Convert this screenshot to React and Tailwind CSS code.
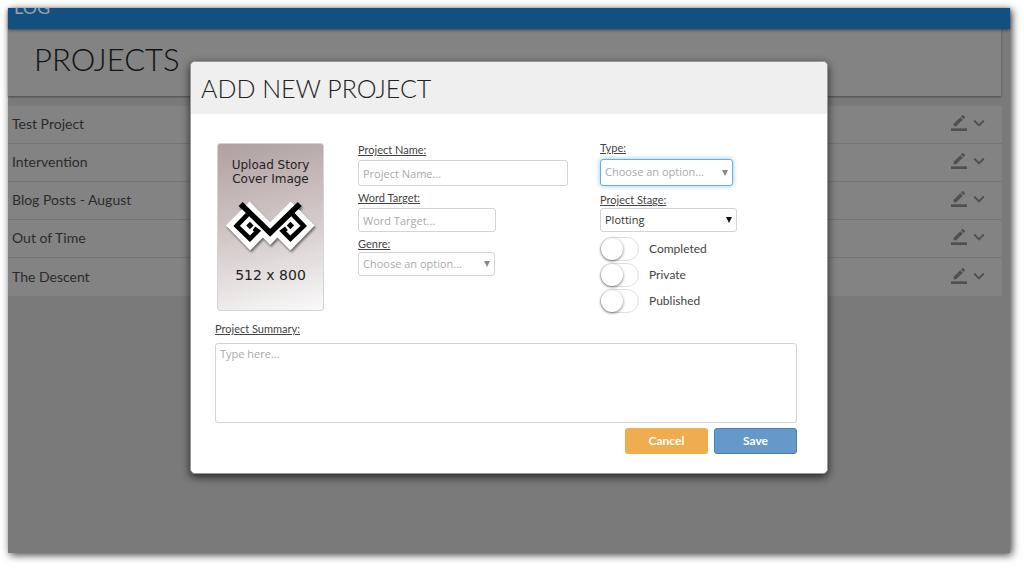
import { useState } from "react";
import { MdExpandMore } from "react-icons/md";

const projects = [
  "Test Project",
  "Intervention",
  "Blog Posts - August",
  "Out of Time",
  "The Descent",
];

const fieldClass =
  "block rounded-[3px] border border-[#d4d4d4] bg-white px-1 font-['Open_Sans',sans-serif] text-[11px] placeholder:text-[#aaa] outline-none";

function EditIcon() {
  return (
    <svg viewBox="0 0 24 24" className="size-4" fill="currentColor">
      <path d="M17.75 7 14 3.25l-10 10V17h3.75l10-10zm2.96-2.96a1 1 0 0 0 0-1.41L18.37.29a1 1 0 0 0-1.41 0L15 2.25 18.75 6l1.96-1.96z" />
      <path d="M0 20h24v4H0z" />
    </svg>
  );
}

function Logo() {
  return (
    <svg viewBox="70 205 280 170" className="h-[57px] w-[93px] drop-shadow-[1px_2px_1px_rgba(0,0,0,0.5)]">
      <path
        fill="#fff"
        d="M147 215 209 277 271 215 343 287 270 362 231 323 209 346 187 323 149 362 76 287Z"
      />
      <g fill="none" stroke="#000">
        <path strokeWidth="17" d="M120 222 209 309 298 222" />
        <path strokeWidth="14" d="M142 253 108 288 148 327 171 304 160 296" />
        <path strokeWidth="14" d="M276 253 310 288 270 327 247 304 258 296" />
      </g>
      <path d="M148 276 159 287 148 298 137 287Z" />
      <path d="M270 276 281 287 270 298 259 287Z" />
    </svg>
  );
}

function Label({ htmlFor, children }) {
  return (
    <label htmlFor={htmlFor} className="block text-[11px] leading-4 text-[#444] underline">
      {children}
    </label>
  );
}

function Select({ id, className, value, onChange, options, arrowClass }) {
  return (
    <div className="relative w-fit">
      <select
        id={id}
        value={value}
        onChange={onChange}
        className={`${fieldClass} appearance-none pr-5 ${className}`}
      >
        {options.map((option) => (
          <option key={option}>{option}</option>
        ))}
      </select>
      <svg
        viewBox="0 0 6 6"
        className={`pointer-events-none absolute top-1/2 right-[5px] size-[6px] -translate-y-1/2 ${arrowClass}`}
        fill="currentColor"
      >
        <path d="M0 0h6L3 6z" />
      </svg>
    </div>
  );
}

function Toggle({ id, children }) {
  return (
    <div className="flex items-center gap-[10px]">
      <input
        id={id}
        type="checkbox"
        className="h-6 w-[39px] appearance-none rounded-full border border-[#dfdfdf] bg-white before:block before:size-[22px] before:rounded-full before:bg-white before:shadow-[0_1px_3px_rgba(0,0,0,0.55)] checked:bg-[#6699c9] checked:before:ml-[15px]"
      />
      <label htmlFor={id} className="text-xs leading-4 text-[#444]">
        {children}
      </label>
    </div>
  );
}

function ProjectForm({ onClose }) {
  const [genre, setGenre] = useState("Choose an option...");
  const [type, setType] = useState("Choose an option...");
  const [stage, setStage] = useState("Plotting");

  return (
    <form
      onSubmit={(e) => e.preventDefault()}
      className="w-full max-w-[638px] overflow-hidden rounded-[5px] border border-[#999] bg-white shadow-[0_3px_9px_rgba(0,0,0,0.7)]"
    >
      <h2 className="bg-[#efefef] px-[10px] py-2 text-[25px] leading-9 font-light text-[#222]">
        ADD NEW PROJECT
      </h2>
      <div className="px-6 pt-[26px] pb-[19px]">
        <div className="flex">
          <button
            type="button"
            className="mx-[2px] mt-[3px] flex h-[168px] w-[107px] shrink-0 flex-col items-center rounded-[3px] border border-[#d4d4d4] bg-linear-165 from-[#b0a0a0] via-[#d2c8c8] to-[#fafafa] pt-[14px] font-['DejaVu_Sans',sans-serif] text-[#222]"
          >
            <span className="text-xs leading-[14px]">
              Upload Story
              <br />
              Cover Image
            </span>
            <span className="mt-3 mb-3">
              <Logo />
            </span>
            <span className="text-sm leading-4">512 x 800</span>
          </button>
          <div className="ml-8 w-[242px] pt-[2px]">
            <Label htmlFor="name">Project Name:</Label>
            <input id="name" placeholder="Project Name..." className={`${fieldClass} mt-[2px] h-[26px] w-[210px]`} />
            <div className="mt-1">
              <Label htmlFor="target">Word Target:</Label>
              <input id="target" placeholder="Word Target..." className={`${fieldClass} mt-[2px] h-6 w-[138px]`} />
            </div>
            <div className="mt-1">
              <Label htmlFor="genre">Genre:</Label>
              <Select
                id="genre"
                value={genre}
                onChange={(e) => setGenre(e.target.value)}
                options={["Choose an option...", "Fantasy", "Mystery"]}
                className="h-6 w-[137px] text-[#aaa]"
                arrowClass="text-[#888]"
              />
            </div>
          </div>
          <div>
            <Label htmlFor="type">Type:</Label>
            <div className="mt-[3px]">
              <Select
                id="type"
                value={type}
                onChange={(e) => setType(e.target.value)}
                options={["Choose an option...", "Novel", "Short Story"]}
                className="h-[27px] w-[133px] border-[#66afe9]! text-[#aaa] shadow-[0_0_5px_rgba(102,175,233,0.7)]"
                arrowClass="text-[#888]"
              />
            </div>
            <div className="mt-[6px]">
              <Label htmlFor="stage">Project Stage:</Label>
              <Select
                id="stage"
                value={stage}
                onChange={(e) => setStage(e.target.value)}
                options={["Plotting", "Drafting", "Editing"]}
                className="h-6 w-[137px] text-[#333]"
                arrowClass="text-[#111]"
              />
            </div>
            <div className="mt-[5px] flex flex-col gap-[2px]">
              <Toggle id="completed">Completed</Toggle>
              <Toggle id="private">Private</Toggle>
              <Toggle id="published">Published</Toggle>
            </div>
          </div>
        </div>
        <div className="mt-2 pr-[6px]">
          <Label htmlFor="summary">Project Summary:</Label>
          <textarea
            id="summary"
            placeholder="Type here..."
            className={`${fieldClass} mt-[6px] h-20 w-full resize-none pt-[2px]`}
          />
          <div className="mt-[5px] flex justify-end gap-[6px] text-xs font-bold text-white">
            <button type="button" onClick={onClose} className="h-[26px] w-[83px] rounded-[3px] bg-[#f0ad4e]">
              Cancel
            </button>
            <button type="submit" className="h-[26px] w-[83px] rounded-[3px] border border-[#4a80b4] bg-[#6699c9]">
              Save
            </button>
          </div>
        </div>
      </div>
    </form>
  );
}

export default function App() {
  const [isFormVisible, setIsFormVisible] = useState(true);

  return (
    <div className="flex min-h-screen bg-white pt-2 pr-[14px] pb-[15px] pl-2 font-['Lato',sans-serif]">
      <div className="relative flex-1 bg-[#7a7a7a] shadow-[2px_2px_8px_rgba(0,0,0,0.75)]">
        <header className="relative flex h-[21px] items-end overflow-hidden bg-[#13507f] px-[6px] pb-3 shadow-[0_1px_3px_rgba(0,0,0,0.5)]">
          <span className="text-lg leading-5 text-[#8fa3b3]">LOG</span>
        </header>
        <h1 className="mr-[9px] bg-[#838383] px-[26px] pt-[10px] pb-[17px] text-[31px] leading-10 font-light text-[#111] shadow-[0_1px_2px_rgba(0,0,0,0.4)]">
          PROJECTS
        </h1>
        <ul className="mt-[10px] mr-2 divide-y divide-[#757575] bg-[#838383]">
          {projects.map((name) => (
            <li key={name} className="flex h-[38px] items-center justify-between pr-3 pb-px pl-1 text-sm text-[#2b2b2b]">
              {name}
              <span className="flex items-center gap-px pb-[2px] text-[#505050]">
                <button type="button" aria-label={`Edit ${name}`}>
                  <EditIcon />
                </button>
                <button type="button" aria-label={`Expand ${name}`}>
                  <MdExpandMore className="size-[22px]" />
                </button>
              </span>
            </li>
          ))}
        </ul>
        {isFormVisible && (
          <div className="absolute inset-0 flex items-start justify-center pt-[53px]">
            <ProjectForm onClose={() => setIsFormVisible(false)} />
          </div>
        )}
      </div>
    </div>
  );
}
